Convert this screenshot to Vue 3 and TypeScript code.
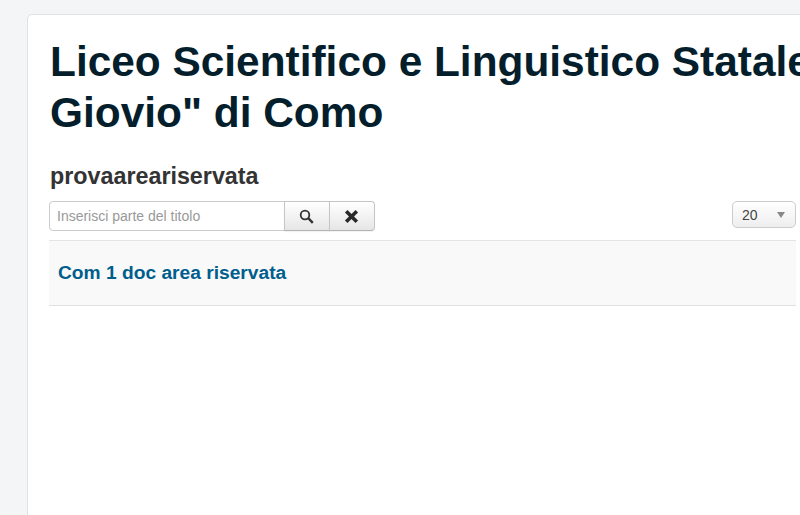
<script setup lang="ts">
import { ref } from 'vue'
const query = ref('')
const perPage = ['20']
const rows = ['Com 1 doc area riservata']
</script>

<template>
  <div class="page">
    <main class="card">
      <h1 class="title">Liceo Scientifico e Linguistico Statale "Paolo Giovio" di Como</h1>
      <h2 class="subtitle">provaareariservata</h2>
      <div class="toolbar">
        <div class="search">
          <input v-model="query" class="input" type="text" placeholder="Inserisci parte del titolo" />
          <button class="btn btn-first" type="button" aria-label="Cerca">
            <svg class="icon" width="15" height="15" viewBox="0 0 15 15" fill="none" stroke="#333">
              <circle cx="6" cy="6" r="4.3" stroke-width="1.8" />
              <path d="M9.2 9.2l4.6 4.6" stroke-width="2.4" />
            </svg>
          </button>
          <button class="btn btn-last" type="button" aria-label="Cancella">
            <svg class="icon" width="15" height="15" viewBox="0 0 15 15" fill="none" stroke="#2a2a2a">
              <path d="M2.2 2.2l10.6 10.6M12.8 2.2L2.2 12.8" stroke-width="3.6" />
            </svg>
          </button>
        </div>
        <div class="select">
          <span>{{ perPage[0] }}</span>
          <i class="caret"></i>
        </div>
      </div>
      <div v-for="row in rows" :key="row" class="row">
        <a class="row-link" href="#">{{ row }}</a>
      </div>
    </main>
  </div>
</template>

<style scoped>
.page {
  height: 515px;
  overflow: hidden;
  padding: 14px 0 0 27px;
  box-sizing: border-box;
  background: #f4f5f7;
  font-family: "Liberation Sans", Arial, sans-serif;
}
.card {
  box-sizing: border-box;
  width: 790px;
  height: 520px;
  padding: 21px 20px 0 21px;
  background: #fff;
  border: 1px solid #e1e2e4;
  border-radius: 5px;
}
.title {
  margin: 0 -200px 0 1px;
  font-size: 42.4px;
  line-height: 51px;
  font-weight: 700;
  color: #041e2c;
}
.subtitle {
  margin: 23px 0 0 1px;
  font-size: 23.3px;
  line-height: 30px;
  font-weight: 700;
  color: #333;
}
.toolbar {
  display: flex;
  justify-content: space-between;
  align-items: flex-start;
  margin-top: 10px;
}
.search {
  display: flex;
}
.input {
  box-sizing: border-box;
  width: 236px;
  height: 30px;
  padding: 0 7px;
  border: 1px solid #ccc;
  border-radius: 4px 0 0 4px;
  font: 14px "Liberation Sans", Arial, sans-serif;
  color: #555;
  background: #fff;
  outline: none;
}
.input::placeholder {
  color: #999;
  opacity: 1;
}
.btn {
  display: flex;
  align-items: center;
  justify-content: center;
  box-sizing: border-box;
  width: 46px;
  height: 30px;
  padding: 0;
  background: linear-gradient(#fff, #e6e6e6);
  border: 1px solid #c5c5c5;
  border-bottom-color: #b3b3b3;
  box-shadow: 0 1px 1px rgba(0, 0, 0, 0.05);
}
.icon {
  margin-right: 2px;
}
.btn-first {
  margin-left: -1px;
  border-radius: 0;
}
.btn-last {
  margin-left: -1px;
  border-radius: 0 4px 4px 0;
}
.select {
  display: flex;
  align-items: center;
  justify-content: space-between;
  box-sizing: border-box;
  width: 64px;
  height: 27px;
  padding: 0 10px 0 9px;
  border: 1px solid #ccc;
  border-radius: 5px;
  background: linear-gradient(#fff, #eee);
  font-size: 14px;
  color: #444;
}
.caret {
  width: 0;
  height: 0;
  border-left: 4px solid transparent;
  border-right: 4px solid transparent;
  border-top: 6px solid #888;
}
.row {
  display: flex;
  align-items: center;
  box-sizing: border-box;
  height: 66px;
  margin-top: 9px;
  padding-left: 9px;
  background: #f9f9f9;
  border-top: 1px solid #e4e4e4;
  border-bottom: 1px solid #e0e0e0;
}
.row-link {
  font-size: 19.2px;
  font-weight: 700;
  color: #005e8d;
  text-decoration: none;
}
</style>
